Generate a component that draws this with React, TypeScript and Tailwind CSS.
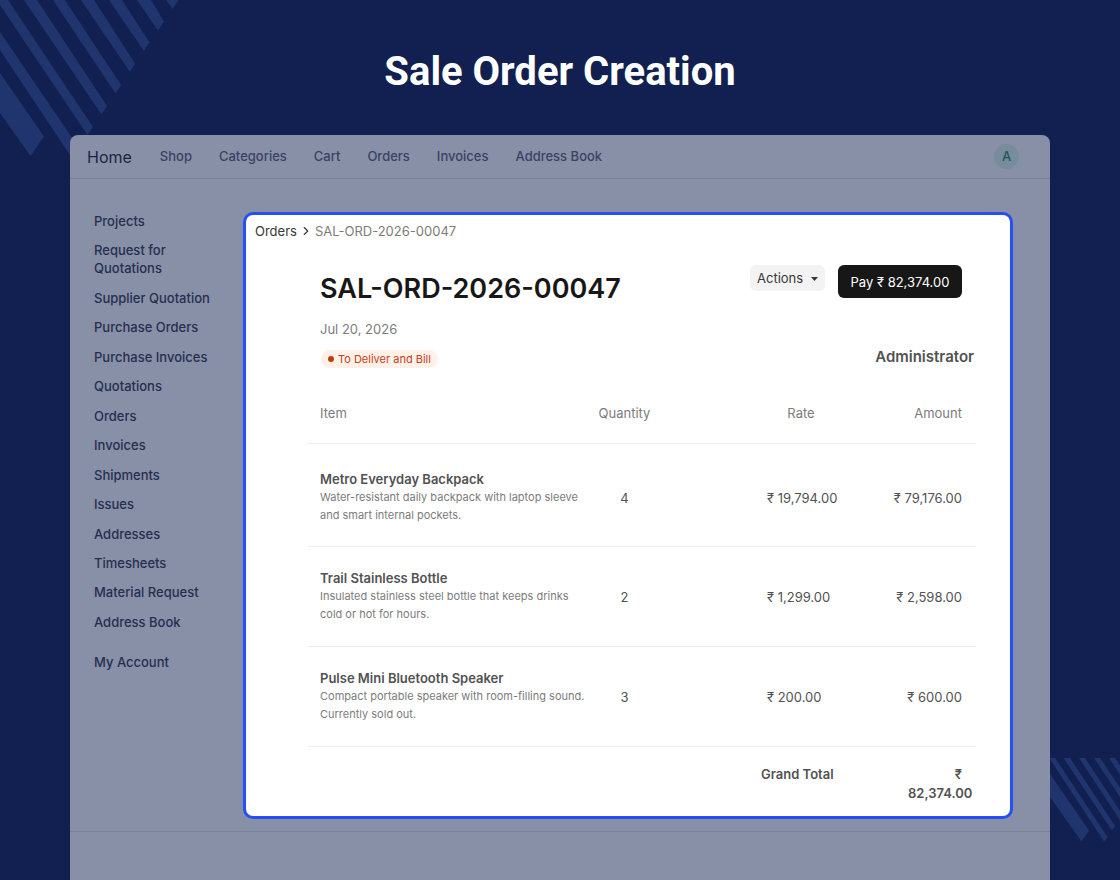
import { ChevronRight } from "lucide-react";

const topLinks = ["Shop", "Categories", "Cart", "Orders", "Invoices", "Address Book"];

const sideLinks = [
  "Projects",
  "Request for Quotations",
  "Supplier Quotation",
  "Purchase Orders",
  "Purchase Invoices",
  "Quotations",
  "Orders",
  "Invoices",
  "Shipments",
  "Issues",
  "Addresses",
  "Timesheets",
  "Material Request",
  "Address Book",
];

const items = [
  {
    name: "Metro Everyday Backpack",
    description: "Water-resistant daily backpack with laptop sleeve and smart internal pockets.",
    quantity: 4,
    rate: "₹ 19,794.00",
    amount: "₹ 79,176.00",
  },
  {
    name: "Trail Stainless Bottle",
    description: "Insulated stainless steel bottle that keeps drinks cold or hot for hours.",
    quantity: 2,
    rate: "₹ 1,299.00",
    amount: "₹ 2,598.00",
  },
  {
    name: "Pulse Mini Bluetooth Speaker",
    description: "Compact portable speaker with room-filling sound. Currently sold out.",
    quantity: 3,
    rate: "₹ 200.00",
    amount: "₹ 600.00",
  },
];

function TopStripes() {
  return (
    <svg className="absolute top-0 left-0 w-[180px] h-[160px]" viewBox="0 0 180 160" fill="#20356d" aria-hidden="true">
      <path d="M0 73 44 136.5 30.5 156 0 113Z" />
      <path d="M0 32 79 148 72 158 0 50Z" />
      <path d="M0 0H8L93 127 87.500 135 0 5Z" />
      <path d="M24 0H37L107 106 101.500 114.500Z" />
      <path d="M53 0H65L121 85 115.500 93.500Z" />
      <path d="M81 0H94L135 63.500 130 72Z" />
      <path d="M109 0H122L149.500 42.500 144 51Z" />
      <path d="M137 0H151L164 21.500 158 30.500Z" />
      <path d="M166 0H178.500L172.500 9Z" />
    </svg>
  );
}

function BottomStripes() {
  return (
    <svg className="absolute right-0 bottom-[38px] w-[70px] h-[84px]" viewBox="0 0 70 84" fill="#20356d" aria-hidden="true">
      <path d="M0 16 39 72.500 31.500 83.500 0 39Z" />
      <path d="M0 0H5L57.500 79 54 83.500 0 1Z" />
      <path d="M13.500 0H20L65 68 62 72.500Z" />
      <path d="M29 0H35L70 53V62Z" />
      <path d="M44 0H50L70 30V39Z" />
      <path d="M59 0H65L70 7.500V16.500Z" />
    </svg>
  );
}

function TopBar() {
  return (
    <header className="flex items-center h-11 pl-[17px] pr-[31px] border-b border-[#7b829c]">
      <a href="#home" className="text-base text-[#1c2442]">
        Home
      </a>
      <nav className="flex-1 flex gap-[27px] ml-7 text-[13px] font-medium text-[#3a4262]">
        {topLinks.map((label) => (
          <a key={label} href="#top">
            {label}
          </a>
        ))}
      </nav>
      <button className="size-[25px] rounded-full bg-[#778d9c] text-[13px] font-medium text-[#1e5560]">A</button>
    </header>
  );
}

function SideBar() {
  return (
    <aside className="shrink-0 w-[173px] pl-6 pr-9 text-[13px] leading-[18px] font-medium text-[#262e4e]">
      <nav className="flex flex-col justify-between h-[419px]">
        {sideLinks.map((label) => (
          <a key={label} href="#side" className={label.startsWith("Request") ? "pr-6" : "whitespace-nowrap"}>
            {label}
          </a>
        ))}
      </nav>
      <a href="#account" className="block mt-[22px]">
        My Account
      </a>
    </aside>
  );
}

function ItemsTable() {
  return (
    <table className="w-full table-fixed text-[13px] text-[#525252]">
      <colgroup>
        <col />
        <col className="w-[75px]" />
        <col className="w-[218px]" />
        <col className="w-24" />
      </colgroup>
      <thead>
        <tr className="h-[61px] border-b border-[#ededed] text-[#7c7c7c]">
          <th className="pt-0.5 pl-3 text-left font-normal">Item</th>
          <th className="pt-0.5 text-center font-normal">Quantity</th>
          <th className="pt-0.5 pl-[60px] text-center font-normal">Rate</th>
          <th className="pt-0.5 pr-[14px] text-right font-normal">Amount</th>
        </tr>
      </thead>
      <tbody>
        {items.map((item) => (
          <tr key={item.name} className="group h-[100px] border-b border-[#ededed] first:h-[103px]">
            <td className="pl-3 group-first:pt-1">
              <div className="font-semibold leading-[18px]">{item.name}</div>
              <p className="text-[11px] leading-[18px] text-[#7c7c7c]">{item.description}</p>
            </td>
            <td className="pt-1 text-center group-first:pt-2">{item.quantity}</td>
            <td className="pt-1 pl-[105px] group-first:pt-2">{item.rate}</td>
            <td className="pt-1 pr-[14px] text-right group-first:pt-2">{item.amount}</td>
          </tr>
        ))}
      </tbody>
      <tfoot>
        <tr className="font-semibold leading-[19px] align-top">
          <td colSpan={2} />
          <th className="pt-[18px] pl-[99px] text-left font-semibold">Grand Total</th>
          <td className="pt-[18px] pl-7 pr-[14px] text-right">₹ 82,374.00</td>
        </tr>
      </tfoot>
    </table>
  );
}

function OrderPanel() {
  return (
    <main className="flex-1 h-[607px] rounded-[10px] border-[3px] border-[#2450f5] bg-white">
      <nav aria-label="Breadcrumb" className="flex items-center pt-[7px] pl-[9px] text-[13px] leading-[18px]">
        <a href="#orders" className="text-[#383838]">
          Orders
        </a>
        <ChevronRight className="size-[14px] mx-0.5 text-[#383838]" />
        <span className="text-[#7c7c7c]">SAL-ORD-2026-00047</span>
      </nav>

      <div className="flex items-start pl-[74px] pr-12 mt-[25px]">
        <h2 className="flex-1 pt-1.5 text-[27px] leading-9 font-semibold text-[#171717]">SAL-ORD-2026-00047</h2>
        <button className="flex items-center justify-between w-[75px] h-[26px] pt-0.5 px-[7px] rounded-md bg-[#f3f3f3] text-[13px] text-[#383838]">
          Actions
          <svg className="w-[7px] h-1" viewBox="0 0 7 4" fill="currentColor" aria-hidden="true">
            <path d="M0 0H7L3.500 4Z" />
          </svg>
        </button>
        <button className="w-[124px] h-[33px] pt-0.5 ml-[13px] rounded-md bg-[#171717] text-[13px] text-white">
          Pay ₹ 82,374.00
        </button>
      </div>

      <p className="pl-[74px] mt-[13px] text-[13px] leading-[18px] text-[#7c7c7c]">Jul 20, 2026</p>
      <div className="flex items-center justify-between pl-[75px] pr-9 mt-[7px] h-7">
        <span className="flex items-center gap-1 h-[18px] px-[7px] rounded-full bg-[#fff1e7] text-[11px] text-[#c4421a]">
          <span className="size-[6px] rounded-full bg-[#bd3e0c]" />
          To Deliver and Bill
        </span>
        <span className="pb-1 text-[15px] leading-5 font-semibold text-[#525252]">Administrator</span>
      </div>

      <div className="pl-[62px] pr-[34px] mt-[9px]">
        <ItemsTable />
      </div>
    </main>
  );
}

export default function App() {
  return (
    <div className="relative flex flex-col min-h-screen overflow-hidden bg-[#112050] px-[70px] font-['Inter','Liberation_Sans',sans-serif]">
      <TopStripes />
      <BottomStripes />
      <h1 className="h-[135px] pt-[47px] text-center text-[40px] leading-[50px] font-bold text-white font-['Roboto',sans-serif]">
        Sale Order Creation
      </h1>
      <div className="relative flex-1 rounded-t-lg bg-[#8890a8]">
        <TopBar />
        <div className="flex items-start pt-[33px] pr-[37px] pb-3">
          <SideBar />
          <OrderPanel />
        </div>
        <footer className="h-12 border-t border-[#7b829c]" />
      </div>
    </div>
  );
}
